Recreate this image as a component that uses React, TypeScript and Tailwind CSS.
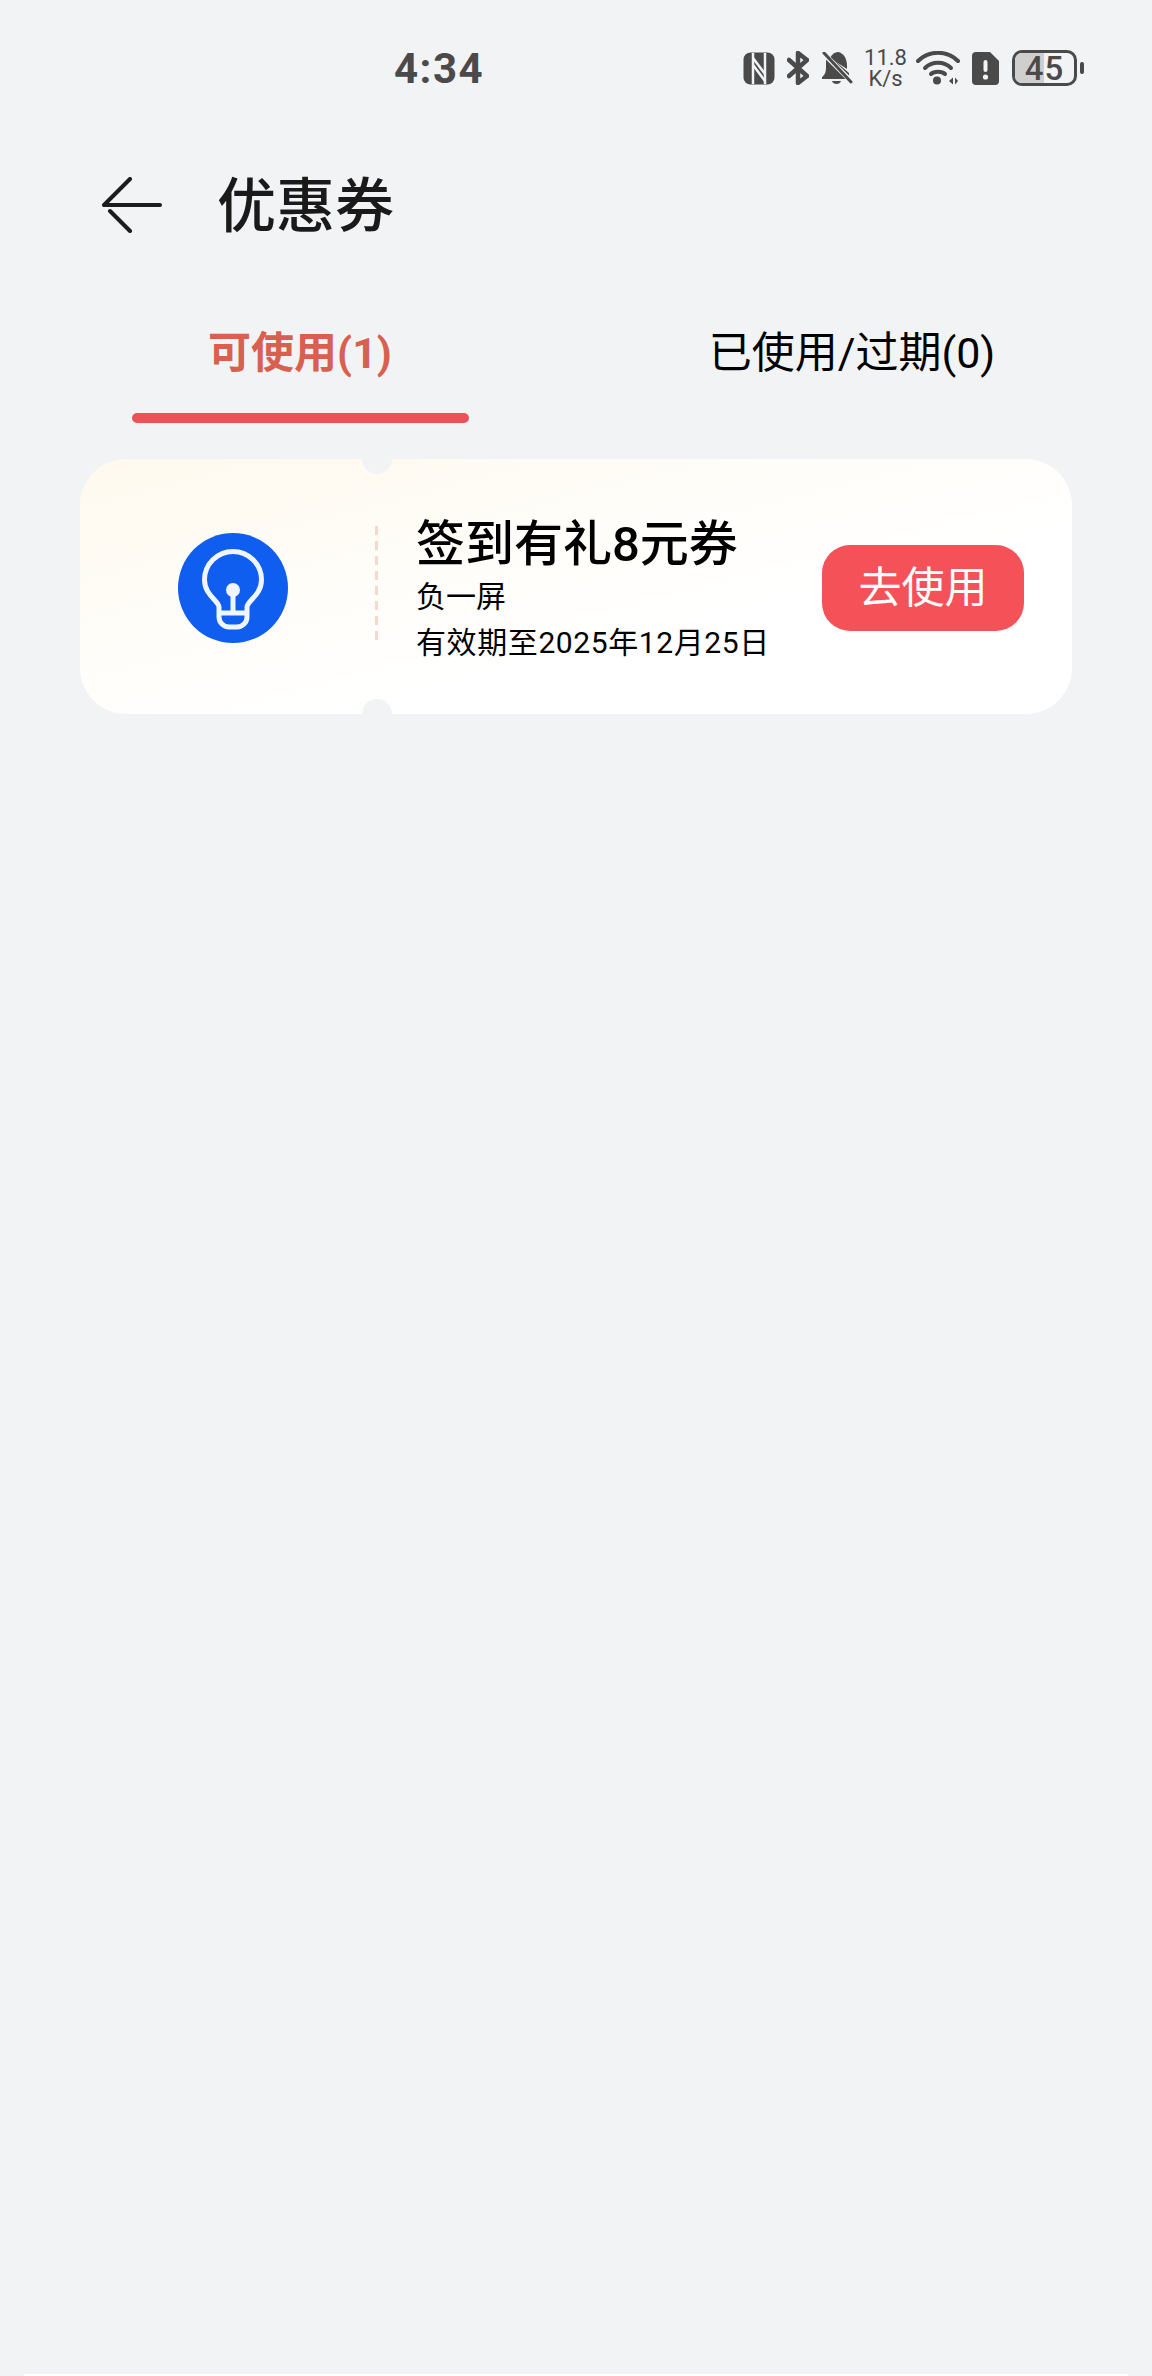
const cjk = "font-['Roboto','Noto_Sans_CJK_SC',sans-serif]";

function StatusIcons() {
  return (
    <div className="flex items-center text-[#4a4a4a]">
      {/* NFC */}
      <svg width="32" height="33" viewBox="0 0 32 33" fill="none">
        <rect x="0.5" y="0.5" width="31" height="32" rx="7" fill="#4a4a4a" />
        <path d="M10 1V32 M22 1V32" stroke="#f2f3f5" strokeWidth="2.5" />
        <path d="M10 6L22 22 M10 13L22 29" stroke="#f2f3f5" strokeWidth="2.5" />
      </svg>
      {/* 蓝牙 */}
      <svg width="22" height="34" viewBox="0 0 22 34" className="ml-[12px]" fill="none" stroke="#4a4a4a" strokeWidth="4.5" strokeLinecap="round" strokeLinejoin="round">
        <path d="M2 9L20 25L11 32V2L20 9L2 25" />
      </svg>
      {/* 静音 */}
      <svg width="32" height="33" viewBox="0 0 32 33" className="ml-[12px]">
        <path d="M6 2L28 21C28 23 28 25 29 26L25 27H1V25C4 23 5 20 5 15V9Z" fill="#4a4a4a" />
        <path d="M9 6C11 2 14 0 17 0C23 1 26 7 26 14V17Z" fill="#4a4a4a" />
        <path d="M11 29H20C19 33 12 33 11 29Z" fill="#4a4a4a" />
        <path d="M2 1L31 30" stroke="#f2f3f5" strokeWidth="5" />
        <path d="M3 1L30 30" stroke="#4a4a4a" strokeWidth="3" strokeLinecap="round" />
      </svg>
      <div className="ml-[12px] flex w-[41px] flex-col items-center font-['Roboto',sans-serif] text-[22px] leading-[21px]">
        <span>11.8</span>
        <span>K/s</span>
      </div>
      {/* Wi-Fi */}
      <svg width="44" height="34" viewBox="0 0 44 34" className="ml-[10px]" fill="none" stroke="#4a4a4a" strokeWidth="4" strokeLinecap="round">
        <path d="M2 10C13 -1 31 -1 42 10" />
        <path d="M9 17C16 10 28 10 35 17" />
        <path d="M15 23C18 20 26 20 29 23" />
        <circle cx="21" cy="29.5" r="4" fill="#4a4a4a" stroke="none" />
        <path d="M33 30L37 26.5V33.5Z M42 30L39 26.5V33.5Z" fill="#4a4a4a" stroke="none" />
      </svg>
      {/* SIM */}
      <svg width="27" height="33" viewBox="0 0 27 33" className="ml-[12px]">
        <path d="M4 0H18L27 9V29A4 4 0 0 1 23 33H4A4 4 0 0 1 0 29V4A4 4 0 0 1 4 0Z" fill="#4a4a4a" />
        <rect x="11.5" y="8" width="4" height="12" rx="2" fill="#f2f3f5" />
        <circle cx="13.5" cy="25" r="2.6" fill="#f2f3f5" />
      </svg>
      {/* 电量 */}
      <div className="ml-[13px] h-[36px] w-[65px] overflow-hidden rounded-[10px] border-[3px] border-[#4a4a4a]">
        <div className="relative flex h-full w-full items-center justify-center">
          <div className="absolute inset-y-0 left-0 w-[29px] bg-[#cfcfcf]" />
          <span className="relative font-['Roboto',sans-serif] text-[33px] font-medium leading-none tracking-[1px]">45</span>
        </div>
      </div>
      <div className="ml-[3px] h-[12px] w-[4px] rounded-full bg-[#4a4a4a]" />
    </div>
  );
}

function CouponCard() {
  return (
    <div className="relative flex h-[255px] items-center overflow-hidden rounded-[46px] bg-linear-to-br from-[#fff9ee] via-[#fffdf8] via-35% to-white to-65%">
      <div className="absolute left-[282px] top-[-15px] h-[30px] w-[30px] rounded-full bg-[#f1f3f5]" />
      <div className="absolute bottom-[-15px] left-[282px] h-[30px] w-[30px] rounded-full bg-[#f1f3f5]" />
      <svg width="110" height="110" viewBox="0 0 110 110" className="ml-[98px] mt-[3px] shrink-0">
        <circle cx="55" cy="55" r="55" fill="#0f5ef0" />
        <path
          d="M41 78V74C41 68 26.5 62 26.5 47A28.5 28.5 0 0 1 83.5 47C83.5 62 69 68 69 74V84A10 10 0 0 1 59 94H51A10 10 0 0 1 41 84Z M41 80H69 M55 57V80"
          fill="none"
          stroke="#f0f6ff"
          strokeWidth="5"
          strokeLinejoin="round"
        />
        <circle cx="55" cy="57" r="7" fill="#f0f6ff" />
      </svg>
      <div className="ml-[87px] mt-[-6px] h-[116px] w-[3px] shrink-0 bg-[repeating-linear-gradient(to_bottom,#f6d9cd_0,#f6d9cd_9px,transparent_9px,transparent_15px)]" />
      <div className={`ml-[38px] mt-[5px] flex flex-1 flex-col text-black ${cjk}`}>
        <div className="text-[49px] font-medium leading-[58px]">签到有礼8元券</div>
        <div className="mt-[3px] text-[30px] leading-[40px]">负一屏</div>
        <div className="mt-[6px] text-[30px] leading-[40px] tracking-[0.6px]">有效期至2025年12月25日</div>
      </div>
      <button className={`mr-[48px] mt-[3px] flex h-[86px] w-[202px] shrink-0 items-center justify-center rounded-[28px] bg-[#f45158] text-[43px] text-white ${cjk}`}>
        去使用
      </button>
    </div>
  );
}

export default function App() {
  return (
    <div className={`flex h-[2376px] w-[1152px] flex-col overflow-hidden bg-[#f1f3f5] ${cjk}`}>
      {/* 状态栏 */}
      <div className="mt-[50px] flex h-[36px] items-center">
        <span className="ml-[394px] mt-[2px] w-[90px] text-[42px] font-bold leading-none tracking-[1.5px] text-[#4a4a4a]">4:34</span>
        <div className="ml-[259px]">
          <StatusIcons />
        </div>
      </div>

      {/* 标题栏 */}
      <div className="mt-[74px] flex h-[90px] items-center">
        <svg width="62" height="56" viewBox="0 0 62 56" className="ml-[101px]" fill="none" stroke="#1c1c1c" strokeWidth="4" strokeLinecap="round" strokeLinejoin="round">
          <path d="M29 2L3 28H59" />
          <path d="M9 34L29 54" />
        </svg>
        <h1 className="ml-[54px] mt-[2px] text-[59px] font-medium leading-none text-[#1a1a1a]">优惠券</h1>
      </div>

      {/* 标签页 */}
      <div className="mt-[70px] grid grid-cols-2 px-[24px]">
        <div className="flex flex-col items-center">
          <span className="text-[43px] font-bold leading-[66px] text-[#d9604f]">可使用(1)</span>
          <div className="mt-[27px] h-[10px] w-[337px] rounded-full bg-[#ef5158]" />
        </div>
        <div className="flex flex-col items-center">
          <span className="text-[43px] leading-[66px] text-black">已使用/过期(0)</span>
        </div>
      </div>

      <div className="mx-[80px] mt-[36px]">
        <CouponCard />
      </div>

      <div className="mx-[24px] mt-auto h-[2px] bg-white" />
    </div>
  );
}
